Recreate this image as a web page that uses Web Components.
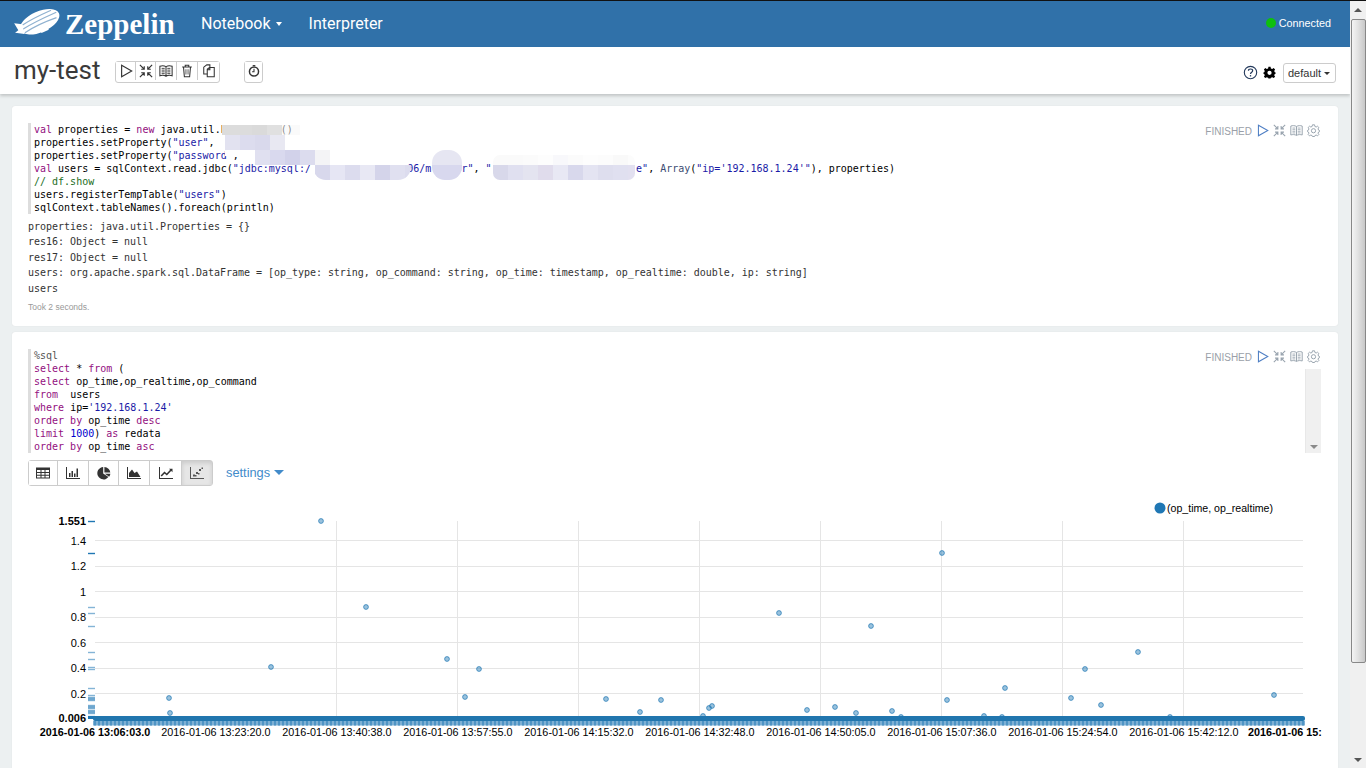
<!DOCTYPE html>
<html>
<head>
<meta charset="utf-8">
<title>my-test</title>
<style>
  html, body { margin: 0; height: 100%; overflow: hidden; background: #ecf0f1; }
  body { display: flex; font-family: "Liberation Sans", sans-serif; }
  zep-page { flex: 1; min-width: 0; }
</style>
</head>
<body>
<zep-page>
  <zep-navbar></zep-navbar>
  <zep-note-header></zep-note-header>
  <zep-paragraph id="p1">
    <zep-code><span class="k">val</span> properties = <span class="k">new</span> java.util.P        s()
properties.setProperty(<span class="s">"user"</span>,
properties.setProperty(<span class="s">"password"</span>,
<span class="k">val</span> users = sqlContext.read.jdbc(<span class="s">"jdbc:mysql:/                06/m    or"</span>, <span class="s">"                        e"</span>, <span class="f">Array</span>(<span class="s">"ip='192.168.1.24'"</span>), properties)
<span class="c">// df.show</span>
users.registerTempTable(<span class="s">"users"</span>)
sqlContext.tableNames().foreach(println)</zep-code>
    <zep-output>properties: java.util.Properties = {}
res16: Object = null
res17: Object = null
users: org.apache.spark.sql.DataFrame = [op_type: string, op_command: string, op_time: timestamp, op_realtime: double, ip: string]
users</zep-output>
    <zep-took>Took 2 seconds.</zep-took>
    <zep-redact></zep-redact>
  </zep-paragraph>
  <zep-paragraph id="p2">
    <zep-code scroll><span class="m">%sql</span>
<span class="k">select</span> * <span class="k">from</span> (
<span class="k">select</span> op_time,op_realtime,op_command
<span class="k">from</span>  users
<span class="k">where</span> ip=<span class="s">'192.168.1.24'</span>
<span class="k">order by</span> op_time <span class="k">desc</span>
<span class="k">limit</span> <span class="n">1000</span>) <span class="k">as</span> redata
<span class="k">order by</span> op_time <span class="k">asc</span></zep-code>
    <zep-chart-toolbar></zep-chart-toolbar>
    <zep-scatter></zep-scatter>
  </zep-paragraph>
</zep-page>
<zep-scrollbar></zep-scrollbar>

<script>
const ICONS = {
  play: '<path d="M3 1.5 L14.5 8 L3 14.5 Z" fill="none" stroke="currentColor" stroke-width="1.3" stroke-linejoin="miter"/>',
  collapse: '<g fill="none" stroke="currentColor" stroke-width="1.3"><path d="M1 1 L6 6 M6 2.5 V6 H2.5"/><path d="M15 1 L10 6 M10 2.5 V6 H13.5"/><path d="M1 15 L6 10 M6 13.5 V10 H2.5"/><path d="M15 15 L10 10 M10 13.5 V10 H13.5"/></g>',
  book: '<g fill="none" stroke="currentColor" stroke-width="1.2"><path d="M8 3 C6 1.8 3 1.8 1 2.5 V13.5 C3 12.8 6 12.8 8 14 C10 12.8 13 12.8 15 13.5 V2.5 C13 1.8 10 1.8 8 3 Z M8 3 V14"/><path d="M3 5 H6.5 M3 7 H6.5 M3 9 H6.5 M3 11 H6.5 M9.5 5 H13 M9.5 7 H13 M9.5 9 H13 M9.5 11 H13" stroke-width="1"/></g>',
  trash: '<g fill="none" stroke="currentColor" stroke-width="1.2"><path d="M2.5 3.5 H13.5 M6 3.5 V1.5 H10 V3.5"/><path d="M4 3.5 L5 14.5 H11 L12 3.5"/><path d="M6.8 6 V12 M9.2 6 V12" stroke-width=".9"/></g>',
  docs: '<g fill="none" stroke="currentColor" stroke-width="1.2"><path d="M2 3.5 L5.5 1 H9 V4 M2 3.5 V11.5 H6"/><path d="M6 6 L8.5 4 H14 V14.5 H6 Z M6 6.5 H9 V4"/></g>',
  clock: '<g fill="none" stroke="currentColor"><circle cx="8" cy="8.5" r="5.2" stroke-width="1.7"/><path d="M8 5.5 V8.8 H5.8" stroke-width="1.2"/><path d="M6.5 1.8 H9.5" stroke-width="1.2"/></g>',
  help: '<g fill="none" stroke="currentColor"><circle cx="8" cy="8" r="6.6" stroke-width="1.2"/><path d="M5.8 6.2 C5.8 3.6 10.3 3.6 10.3 6.2 C10.3 7.8 8 7.6 8 9.6" stroke-width="1.3"/><path d="M8 10.8 V12.2" stroke-width="1.4"/></g>',
  gear: '<path fill="currentColor" fill-rule="evenodd" d="M6.7 1 H9.3 L9.7 3 L11.4 3.7 L13.1 2.6 L14.9 4.4 L13.8 6.1 L14.5 7.8 L15.5 8 V9.4 L14.5 9.8 L13.8 11.4 L14.9 13.1 L13.1 14.9 L11.4 13.8 L9.7 14.5 L9.3 15.5 H6.7 L6.3 14.5 L4.6 13.8 L2.9 14.9 L1.1 13.1 L2.2 11.4 L1.5 9.8 L.5 9.4 V8 L1.5 7.8 L2.2 6.1 L1.1 4.4 L2.9 2.6 L4.6 3.7 L6.3 3 Z M8 5.8 A2.6 2.6 0 1 0 8 11 A2.6 2.6 0 1 0 8 5.8 Z"/>',
  gearline: '<g fill="none" stroke="currentColor" stroke-width="1.2"><path d="M6.7 1 H9.3 L9.7 3 L11.3 3.7 L12.9 2.7 L14.6 4.4 L13.6 6 L14.3 7.6 L15.4 8 V9.4 L14.3 9.8 L13.6 11.3 L14.6 12.9 L12.9 14.6 L11.3 13.6 L9.7 14.3 L9.3 15.4 H6.7 L6.3 14.3 L4.7 13.6 L3.1 14.6 L1.4 12.9 L2.4 11.3 L1.7 9.8 L.6 9.4 V8 L1.7 7.6 L2.4 6 L1.4 4.4 L3.1 2.7 L4.7 3.7 L6.3 3 Z"/><circle cx="8" cy="8.3" r="2.6"/></g>'
};
const icon = (name, size = 16) => `<svg width="${size}" height="${size}" viewBox="0 0 16 16" aria-hidden="true">${ICONS[name]}</svg>`;

class ZepPage extends HTMLElement {
  constructor() {
    super();
    this.attachShadow({ mode: 'open' });
    this.shadowRoot.innerHTML = `
      <style>
        :host { display: block; height: 768px; overflow: hidden; }
        .body { display: flex; flex-direction: column; gap: 6px; padding: 0 12px; margin-top: 12px; }
      </style>
      <slot name="top"></slot>
      <div class="body"><slot></slot></div>`;
  }
  connectedCallback() {
    this.querySelector('zep-navbar').slot = 'top';
    this.querySelector('zep-note-header').slot = 'top';
  }
}

class ZepNavbar extends HTMLElement {
  constructor() {
    super();
    this.attachShadow({ mode: 'open' });
    this.shadowRoot.innerHTML = `
      <style>
        :host { display: flex; align-items: center; box-sizing: content-box; height: 44px; padding-bottom: 2px; background: #3071a9; border-top: 1px solid #111; color: #fff; font-family: Roboto, sans-serif; }
        .logo { display: flex; align-items: center; margin-left: 13px; width: 188px; }
        .logo span { font: bold 29px/44px "Liberation Serif", serif; margin-left: 3px; position: relative; top: 1px; }
        a { font-size: 16px; margin-right: 27px; white-space: nowrap; }
        .caret { display: inline-block; margin-left: 1px; vertical-align: 3px; border-top: 4px solid #fff; border-left: 3.5px solid transparent; border-right: 3.5px solid transparent; }
        .status { margin-left: auto; margin-right: 19px; display: flex; align-items: center; font: 10.8px "Liberation Sans", sans-serif; }
        .dot { width: 10px; height: 10px; border-radius: 50%; background: #0ec00e; margin-right: 3px; }
      </style>
      <div class="logo">
        <svg width="49" height="34" viewBox="0 0 49 34">
          <g transform="rotate(-24 24 17)">
            <ellipse cx="27" cy="17" rx="21" ry="10.5" fill="#fff"/>
            <g stroke="#8fb1d0" stroke-width="1.2" fill="none"><path d="M10 13 C20 11 32 11 42 11"/><path d="M8 17 C20 15 32 15 46 15"/><path d="M9 21 C20 19 32 19 44 20"/></g>
            <path d="M10 12 L3 8 L4 16 L0 17 L5 20 L8 22 Z" fill="#fff"/>
            <rect x="24" y="26" width="8" height="2" fill="#fff"/>
          </g>
        </svg>
        <span>Zeppelin</span>
      </div>
      <a>Notebook <i class="caret"></i></a>
      <a>Interpreter</a>
      <div class="status"><i class="dot"></i>Connected</div>`;
  }
}

class ZepNoteHeader extends HTMLElement {
  constructor() {
    super();
    this.attachShadow({ mode: 'open' });
    const btn = (n, w) => `<button style="width:${w}px">${icon(n, 14)}</button>`;
    this.shadowRoot.innerHTML = `
      <style>
        :host { display: flex; align-items: center; height: 47px; background: #fff; box-shadow: 0 2px 3px rgba(0,0,0,.18); position: relative; color: #333; }
        h2 { margin: 0 15px 0 14px; font: 400 26px/47px Roboto, sans-serif; color: #3a3a3a; width: 86px; white-space: nowrap; }
        .group { display: flex; height: 20px; border: 1px solid #ccc; border-radius: 3px; position: relative; top: 1px; }
        button { box-sizing: border-box; height: 18px; padding: 0; margin: 0; border: 0; border-right: 1px solid #ccc; background: #fff; color: #333; display: flex; align-items: center; justify-content: center; }
        .group button:last-child { border-right: 0; }
        .clock { margin-left: 24px; }
        .right { margin-left: auto; margin-right: 14px; display: flex; align-items: center; position: relative; top: 2px; }
        .help { color: #23395b; display: flex; margin-right: 5px; }
        .gear { color: #000; display: flex; margin-right: 7px; }
        .dd { box-sizing: border-box; height: 20px; width: 53px; border: 1px solid #ccc; border-radius: 3px; font: 11px/18px "Liberation Sans", sans-serif; color: #333; padding-left: 4px; white-space: nowrap; }
        .dd i { display: inline-block; margin-left: 3px; vertical-align: 2px; border-top: 3px solid #333; border-left: 3px solid transparent; border-right: 3px solid transparent; }
      </style>
      <h2>my-test</h2>
      <div class="group">${btn('play', 20)}${btn('collapse', 20)}${btn('book', 21)}${btn('trash', 21)}${btn('docs', 21)}</div>
      <div class="group clock">${btn('clock', 17)}</div>
      <div class="right">
        <span class="help">${icon('help', 15)}</span>
        <span class="gear">${icon('gear', 13)}</span>
        <div class="dd">default<i></i></div>
      </div>`;
  }
}

class ZepParagraph extends HTMLElement {
  constructor() {
    super();
    this.attachShadow({ mode: 'open' });
    this.shadowRoot.innerHTML = `
      <style>
        :host { display: block; position: relative; box-sizing: border-box; background: #fff; border-radius: 3px; box-shadow: 0 0 1px rgba(0,0,0,.12); padding: 17px 16px 12px; }
        .ctl { position: absolute; top: 17px; right: 18px; display: flex; align-items: center; height: 15px; color: #98a3ae; }
        .ctl b { font: 400 10px "Liberation Sans", sans-serif; color: #9a9fa8; margin-right: 4px; padding-top: 2px; }
        .ctl svg { display: block; margin-left: 4px; width: 13px; height: 13px; }
        .ctl .go { color: #4f7fc4; }
        .ctl .go svg { margin-left: 0; }
      </style>
      <slot></slot>
      <div class="ctl"><b>FINISHED</b><span class="go">${icon('play', 13)}</span>${icon('collapse', 13)}${icon('book', 13)}${icon('gearline', 13)}</div>`;
  }
}

class ZepCode extends HTMLElement {
  constructor() {
    super();
    this.attachShadow({ mode: 'open' });
    this.shadowRoot.innerHTML = `
      <style>
        :host { display: block; position: relative; }
        .code { border-left: 3px solid #ddd; padding-left: 3px; font: 10px/13px "DejaVu Sans Mono", monospace; white-space: pre; color: #000; }
        ::slotted(.k) { color: rgb(147,15,128); }
        ::slotted(.s) { color: rgb(26,26,166); }
        ::slotted(.c) { color: rgb(35,110,36); }
        ::slotted(.f) { color: rgb(60,76,114); }
        ::slotted(.n) { color: rgb(0,0,205); }
        ::slotted(.m) { color: #555; }
        .sb { display: none; position: absolute; right: 1px; top: 20px; bottom: 0; width: 16px; background: #f0f0f0; border-left: 1px solid #e8e8e8; box-sizing: border-box; }
        :host([scroll]) .sb { display: block; }
        .sb i { position: absolute; bottom: 4px; left: 4px; border-top: 4px solid #8a8a8a; border-left: 4px solid transparent; border-right: 4px solid transparent; }
      </style>
      <div class="code"><slot></slot></div>
      <div class="sb"><i></i></div>`;
  }
}

class ZepOutput extends HTMLElement {
  constructor() {
    super();
    this.attachShadow({ mode: 'open' });
    this.shadowRoot.innerHTML = `<style>:host { display: block; margin-top: 5px; font: 10px/15.4px "DejaVu Sans Mono", monospace; letter-spacing: -.023px; white-space: pre; color: #333; }</style><slot></slot>`;
  }
}

class ZepTook extends HTMLElement {
  constructor() {
    super();
    this.attachShadow({ mode: 'open' });
    this.shadowRoot.innerHTML = `<style>:host { display: block; margin-top: 4.5px; font: 8.5px/13px "Liberation Sans", sans-serif; color: #999; }</style><slot></slot>`;
  }
}

// the pixelated patches that hide the host and credentials in the first paragraph
class ZepRedact extends HTMLElement {
  constructor() {
    super();
    this.attachShadow({ mode: 'open' });
    const cells = (x, y, w, h, colors) => colors.map((c, i) => `<rect x="${x + i * w}" y="${y}" width="${w}" height="${h}" fill="${c}"/>`).join('');
    this.shadowRoot.innerHTML = `
      <style>:host { position: absolute; left: 0; top: 0; width: 1326px; height: 220px; pointer-events: none; } svg { display: block; }</style>
      <svg width="1326" height="220" viewBox="12 106 1326 220">
        <defs>
          <clipPath id="a"><rect x="313" y="150" width="98" height="30" rx="13"/></clipPath>
          <clipPath id="b"><rect x="432" y="150" width="30" height="30" rx="13"/></clipPath>
          <clipPath id="d"><rect x="493" y="155" width="142" height="25" rx="7"/></clipPath>
        </defs>
        ${cells(222, 125, 15, 10, ['#dcdcdc', '#dcdcdc', '#dadada', '#e0e0e0'])}
        <rect x="282" y="125" width="18" height="10" fill="#f6f6f6" fill-opacity=".55"/>
        ${cells(225, 135, 15, 15, ['#e2e2f0', '#dcdcee', '#d9d9ec', '#e8e8f2'])}
        <rect x="225" y="150" width="9" height="6" fill="#fff"/>
        ${cells(255, 150, 15, 15, ['#e0e0f0', '#d9d9ee', '#d2d2ea', '#dcdcee', '#f4f4f6'])}
        <g clip-path="url(#a)">${cells(315, 165, 15, 15, ['#d8d8ec', '#e6e6f4', '#dcdcee', '#e8e8f4', '#d4d4ea', '#e0e0f0', '#dcdcee'])}</g>
        <g clip-path="url(#b)"><rect x="432" y="150" width="30" height="15" fill="#e6e6f2"/><rect x="432" y="165" width="30" height="15" fill="#d8d8ee"/></g>
        <g clip-path="url(#d)">
          ${cells(493, 150, 15, 15, ['#fafafa', '#fafafa', '#fbfbfb', '#fdfdfd', '#f8f8fb', '#fbfbfb', '#fdfdfd', '#fcfcfc', '#f9f9f9', '#fcfcfc'])}
          ${cells(493, 165, 15, 15, ['#d8d8ea', '#e0e0f0', '#e4e4f0', '#e0dcec', '#e8e8f4', '#d8d8ec', '#e4e4f2', '#dedeee', '#e0e0f0', '#e2e0f0'])}
        </g>
      </svg>`;
  }
}

class ZepChartToolbar extends HTMLElement {
  constructor() {
    super();
    this.attachShadow({ mode: 'open' });
    const g = (body) => `<svg width="16" height="14" viewBox="0 0 16 14" fill="#333">${body}</svg>`;
    const b = [
      g('<path fill-rule="evenodd" d="M1 1.5 H15 V12.5 H1 Z M2 4 V6 H5.5 V4 Z M6.5 4 V6 H9.5 V4 Z M10.5 4 V6 H14 V4 Z M2 7 V8.8 H5.5 V7 Z M6.5 7 V8.8 H9.5 V7 Z M10.5 7 V8.8 H14 V7 Z M2 9.8 V11.5 H5.5 V9.8 Z M6.5 9.8 V11.5 H9.5 V9.8 Z M10.5 9.8 V11.5 H14 V9.8 Z"/>'),
      g('<path d="M1 1 H2 V12 H15 V13 H1 Z M4 7 H5.5 V11 H4 Z M6.5 5 H8 V11 H6.5 Z M9 7.5 H10.5 V11 H9 Z M11.5 2.5 H13 V11 H11.5 Z"/>'),
      g('<path d="M7.2 1 V7.4 L12.4 11 A6.2 6.2 0 1 1 7.2 1 Z M8.4 1 A6 6 0 0 1 14.3 6.6 H8.4 Z M8.8 7.8 H14.4 A6 6 0 0 1 13.2 10.7 Z"/>'),
      g('<path d="M1 1 H2 V12 H15 V13 H1 Z M3 11 V7 L6 3.5 L8.5 7 L11 5.5 L14.5 11 Z"/>'),
      g('<path d="M1 1 H2 V12 H15 V13 H1 Z"/><path d="M3.2 10 L6.5 6.5 L8.8 8.5 L13 4" fill="none" stroke="#333" stroke-width="1.6"/><path d="M11 2.8 H14.5 V6.3 Z"/>'),
      g('<path fill="#555" d="M1 1 H2 V12 H15 V13 H1 Z"/><g fill="#555"><rect x="4" y="8.5" width="2" height="2"/><rect x="7" y="6" width="2" height="2"/><rect x="6" y="9" width="1.5" height="1.5"/><rect x="10" y="3" width="2" height="2"/><rect x="12.5" y="1.5" width="1.5" height="1.5"/><rect x="9" y="7" width="1.5" height="1.5"/></g>')
    ];
    const widths = [29, 31, 30, 31, 32, 30];
    this.shadowRoot.innerHTML = `
      <style>
        :host { display: flex; align-items: center; margin-top: 7px; height: 26px; }
        .group { display: flex; border: 1px solid #ccc; border-radius: 3px; height: 26px; box-sizing: border-box; }
        button { box-sizing: border-box; padding: 0; margin: 0; border: 0; border-right: 1px solid #ccc; background: #fff; display: flex; align-items: center; justify-content: center; }
        button:last-child { border-right: 0; background: #e6e6e6; box-shadow: inset 0 2px 4px rgba(0,0,0,.125); }
        a { margin-left: 13px; font: 12.8px "Liberation Sans", sans-serif; color: #428bca; }
        a i { display: inline-block; margin-left: 0; vertical-align: 2px; border-top: 5px solid #428bca; border-left: 5px solid transparent; border-right: 5px solid transparent; }
      </style>
      <div class="group">${b.map((s, i) => `<button style="width:${widths[i]}px">${s}</button>`).join('')}</div>
      <a>settings <i></i></a>`;
  }
}

class ZepScatter extends HTMLElement {
  constructor() {
    super();
    this.attachShadow({ mode: 'open' });
  }
  connectedCallback() {
    const pts = [[321,521],[366,607],[169,698],[170,713],[271,667],[447,659],[465,697],[479,669],[606,699],[640,712],[661,700],[703,716],[709,708],[712,706],[779,613],[807,710],[835,707],[856,713],[871,626],[892,711],[901,717],[942,553],[947,700],[984,716],[1002,717],[1005,688],[1071,698],[1085,669],[1101,705],[1138,652],[1170,717],[1274,695]];
    const yLabels = [['1.4',540.5],['1.2',566],['1',591.5],['0.8',617],['0.6',642.5],['0.4',668],['0.2',693.5]];
    const vx = [336,457,578,699,820,941,1062,1183];
    const xLabels = ['13:23:20.0','13:40:38.0','13:57:55.0','14:15:32.0','14:32:48.0','14:50:05.0','15:07:36.0','15:24:54.0','15:42:12.0'];
    const rugY = [607,613,626,652,659,667,669,688,695,697,698,699,700,705,706,707,708,710,711,712,713,716,717];
    let band = '';
    for (let x = 94; x <= 1303; x += 4) band += `<rect x="${x}" y="721" width="2" height="4.5" fill="#4f94c4"/>`;
    this.shadowRoot.innerHTML = `
      <style>
        :host { display: block; margin: 4px -1px 0 0; height: 270px; }
        svg { display: block; font-family: "Liberation Sans", sans-serif; fill: #000; }
        .grid { stroke: #e5e5e5; stroke-width: 1; shape-rendering: crispEdges; }
        .p { fill: #1f77b4; fill-opacity: .45; stroke: #1f77b4; stroke-opacity: .7; }
        .r { stroke: #1f77b4; stroke-opacity: .55; stroke-width: 1.4; }
      </style>
      <svg width="1294" height="270" viewBox="28 490 1294 270">
        <circle cx="1160" cy="508" r="5.5" fill="#1f77b4"/>
        <text x="1167" y="512" font-size="10.6">(op_time, op_realtime)</text>
        ${yLabels.map(([, y]) => `<line class="grid" x1="95" x2="1303" y1="${y}" y2="${y}"/>`).join('')}
        ${vx.map(x => `<line class="grid" x1="${x}" x2="${x}" y1="521" y2="718"/>`).join('')}
        ${yLabels.map(([t, y]) => `<text x="86" y="${y + 4}" font-size="11" text-anchor="end">${t}</text>`).join('')}
        <text x="86" y="525" font-size="11" font-weight="bold" text-anchor="end">1.551</text>
        <text x="86" y="722" font-size="11" font-weight="bold" text-anchor="end">0.006</text>
        <line class="r" x1="88" x2="95" y1="521.5" y2="521.5" style="stroke-opacity:1"/>
        <line class="r" x1="88" x2="95" y1="553.5" y2="553.5" style="stroke-opacity:1"/>
        ${rugY.map(y => `<line class="r" x1="88" x2="95" y1="${y + .5}" y2="${y + .5}"/>`).join('')}
        <rect x="88" y="716" width="7" height="3" fill="#1f77b4"/>
        <rect x="93" y="721" width="1212" height="4.5" fill="#7db0d4"/>
        ${band}
        <rect x="93" y="716" width="1212" height="5" rx="2" fill="#2176ae"/>
        ${pts.map(([x, y]) => `<circle class="p" cx="${x}" cy="${y}" r="2.4"/>`).join('')}
        <text x="95" y="735.5" font-size="10.8" font-weight="bold" text-anchor="middle">2016-01-06 13:06:03.0</text>
        ${xLabels.map((t, i) => `<text x="${216 + i * 121}" y="735.5" font-size="10.8" text-anchor="middle">2016-01-06 ${t}</text>`).join('')}
        <text x="1248" y="735.5" font-size="10.8" font-weight="bold">2016-01-06 15:</text>
      </svg>`;
  }
}

class ZepScrollbar extends HTMLElement {
  constructor() {
    super();
    this.attachShadow({ mode: 'open' });
    this.shadowRoot.innerHTML = `
      <style>
        :host { display: block; position: relative; flex: none; width: 16px; height: 768px; background: #f0f0f0; border-top: 1px solid #111; box-sizing: border-box; }
        .up, .down { position: absolute; left: 4px; border-left: 4px solid transparent; border-right: 4px solid transparent; }
        .up { top: 7px; border-bottom: 4px solid #555; }
        .down { bottom: 6px; border-top: 4px solid #555; }
        .thumb { position: absolute; left: 1px; right: 0; top: 18px; height: 644px; box-sizing: border-box; border: 1px solid #888; border-radius: 2px; background: linear-gradient(to right, #f4f4f4, #e2e2e2 45%, #c8c8c8); }
      </style>
      <i class="up"></i><div class="thumb"></div><i class="down"></i>`;
  }
}

customElements.define('zep-page', ZepPage);
customElements.define('zep-navbar', ZepNavbar);
customElements.define('zep-note-header', ZepNoteHeader);
customElements.define('zep-paragraph', ZepParagraph);
customElements.define('zep-code', ZepCode);
customElements.define('zep-output', ZepOutput);
customElements.define('zep-took', ZepTook);
customElements.define('zep-redact', ZepRedact);
customElements.define('zep-chart-toolbar', ZepChartToolbar);
customElements.define('zep-scatter', ZepScatter);
customElements.define('zep-scrollbar', ZepScrollbar);
</script>
</body>
</html>
